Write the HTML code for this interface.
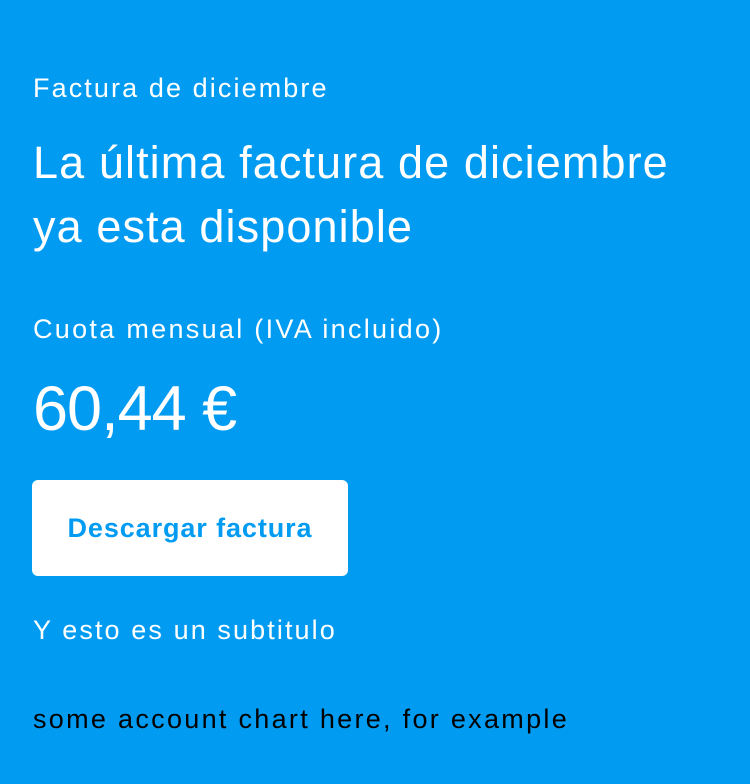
<!DOCTYPE html>
<html><head><meta charset="utf-8"><style>
html,body{margin:0;padding:0}
body{width:750px;height:784px;background:#019cf2;position:relative;overflow:hidden;font-family:"Liberation Sans",sans-serif;color:#fff}
.t{position:absolute;left:33px;white-space:nowrap;line-height:1}
.btn{position:absolute;left:32px;top:480px;width:316px;height:96px;background:#fff;border-radius:6px;color:#019cf2;font-size:27px;font-weight:bold;display:flex;align-items:center;justify-content:center;letter-spacing:0.9px}
</style></head><body>
<div class="t" style="top:75px;font-size:27px;letter-spacing:2.1px">Factura de diciembre</div>
<div class="t" style="font-size:45px;line-height:64px;top:131px;letter-spacing:1.1px">La última factura de diciembre<br>ya esta disponible</div>
<div class="t" style="top:316px;font-size:27px;letter-spacing:2.3px">Cuota mensual (IVA incluido)</div>
<div class="t" style="top:378px;font-size:63px;letter-spacing:-1px">60,44 €</div>
<div class="btn">Descargar factura</div>
<div class="t" style="top:617px;font-size:27px;letter-spacing:2.1px">Y esto es un subtitulo</div>
<div class="t" style="top:706px;font-size:27px;color:#000;letter-spacing:2.3px">some account chart here, for example</div>
</body></html>
